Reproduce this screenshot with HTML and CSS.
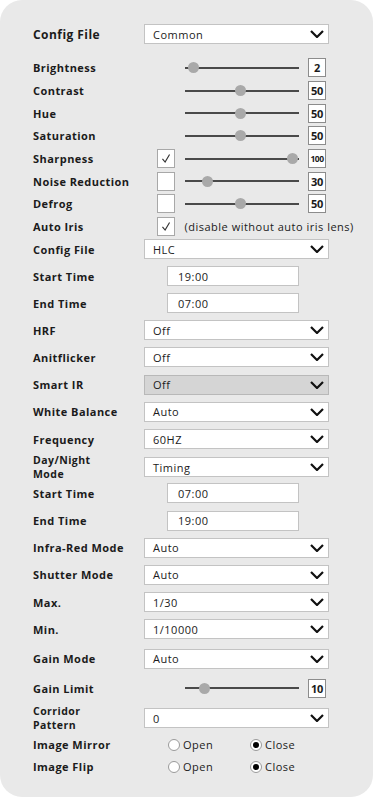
FILE: index.html
```html
<!DOCTYPE html>
<html lang="en">
  <head>
    <meta charset="UTF-8" />
    <meta name="viewport" content="width=device-width, initial-scale=1.0" />
    <title>Image Settings</title>
    <link rel="stylesheet" href="styles.css">
  </head>
  <body>
    <div class="panel">
      <div class="row row-top">
        <span class="label label-lg">Config File</span>
        <div class="select"><span>Common</span><svg class="chev" viewBox="0 0 14 8"><path d="M1 1 L7 7 L13 1" /></svg></div>
      </div>

      <div class="group-sliders">
        <div class="row row-s">
          <span class="label">Brightness</span>
          <div class="slider-ctrl">
            <span></span>
            <div class="slider"><span class="thumb" style="left: 9px"></span></div>
            <span class="val">2</span>
          </div>
        </div>
        <div class="row row-s">
          <span class="label">Contrast</span>
          <div class="slider-ctrl">
            <span></span>
            <div class="slider"><span class="thumb" style="left: 56px"></span></div>
            <span class="val">50</span>
          </div>
        </div>
        <div class="row row-s">
          <span class="label">Hue</span>
          <div class="slider-ctrl">
            <span></span>
            <div class="slider"><span class="thumb" style="left: 56px"></span></div>
            <span class="val">50</span>
          </div>
        </div>
        <div class="row row-s">
          <span class="label">Saturation</span>
          <div class="slider-ctrl">
            <span></span>
            <div class="slider"><span class="thumb" style="left: 56px"></span></div>
            <span class="val">50</span>
          </div>
        </div>
        <div class="row row-s">
          <span class="label">Sharpness</span>
          <div class="slider-ctrl">
            <span class="check"><svg viewBox="0 0 18 19"><path d="M5 10 L8 13.5 L13 5" /></svg></span>
            <div class="slider"><span class="thumb" style="left: 108px"></span></div>
            <span class="val val-sm">100</span>
          </div>
        </div>
        <div class="row row-s">
          <span class="label">Noise Reduction</span>
          <div class="slider-ctrl">
            <span class="check"></span>
            <div class="slider"><span class="thumb" style="left: 23px"></span></div>
            <span class="val">30</span>
          </div>
        </div>
        <div class="row row-s">
          <span class="label">Defrog</span>
          <div class="slider-ctrl">
            <span class="check"></span>
            <div class="slider"><span class="thumb" style="left: 56px"></span></div>
            <span class="val">50</span>
          </div>
        </div>
        <div class="row row-s">
          <span class="label">Auto Iris</span>
          <div class="slider-ctrl">
            <span class="check"><svg viewBox="0 0 18 19"><path d="M5 10 L8 13.5 L13 5" /></svg></span>
            <span class="note">(disable without auto iris lens)</span>
          </div>
        </div>
        <div class="row row-s">
          <span class="label">Config File</span>
          <div class="select"><span>HLC</span><svg class="chev" viewBox="0 0 14 8"><path d="M1 1 L7 7 L13 1" /></svg></div>
        </div>
      </div>

      <div class="group-time">
        <div class="row row-t">
          <span class="label">Start Time</span>
          <div class="time">19:00</div>
        </div>
        <div class="row row-t">
          <span class="label">End Time</span>
          <div class="time">07:00</div>
        </div>
      </div>

      <div class="group-main">
        <div class="row row-m">
          <span class="label">HRF</span>
          <div class="select"><span>Off</span><svg class="chev" viewBox="0 0 14 8"><path d="M1 1 L7 7 L13 1" /></svg></div>
        </div>
        <div class="row row-m">
          <span class="label">Anitflicker</span>
          <div class="select"><span>Off</span><svg class="chev" viewBox="0 0 14 8"><path d="M1 1 L7 7 L13 1" /></svg></div>
        </div>
        <div class="row row-m">
          <span class="label">Smart IR</span>
          <div class="select select-off"><span>Off</span><svg class="chev" viewBox="0 0 14 8"><path d="M1 1 L7 7 L13 1" /></svg></div>
        </div>
        <div class="row row-m">
          <span class="label">White Balance</span>
          <div class="select"><span>Auto</span><svg class="chev" viewBox="0 0 14 8"><path d="M1 1 L7 7 L13 1" /></svg></div>
        </div>
        <div class="row row-m">
          <span class="label">Frequency</span>
          <div class="select"><span>60HZ</span><svg class="chev" viewBox="0 0 14 8"><path d="M1 1 L7 7 L13 1" /></svg></div>
        </div>
        <div class="row row-m">
          <span class="label label-2">Day/Night<br>Mode</span>
          <div class="select"><span>Timing</span><svg class="chev" viewBox="0 0 14 8"><path d="M1 1 L7 7 L13 1" /></svg></div>
        </div>
        <div class="row row-m">
          <span class="label">Start Time</span>
          <div class="time">07:00</div>
        </div>
        <div class="row row-m">
          <span class="label">End Time</span>
          <div class="time">19:00</div>
        </div>
        <div class="row row-m">
          <span class="label">Infra-Red Mode</span>
          <div class="select"><span>Auto</span><svg class="chev" viewBox="0 0 14 8"><path d="M1 1 L7 7 L13 1" /></svg></div>
        </div>
        <div class="row row-m">
          <span class="label">Shutter Mode</span>
          <div class="select"><span>Auto</span><svg class="chev" viewBox="0 0 14 8"><path d="M1 1 L7 7 L13 1" /></svg></div>
        </div>
        <div class="row row-m">
          <span class="label">Max.</span>
          <div class="select"><span>1/30</span><svg class="chev" viewBox="0 0 14 8"><path d="M1 1 L7 7 L13 1" /></svg></div>
        </div>
        <div class="row row-m">
          <span class="label">Min.</span>
          <div class="select"><span>1/10000</span><svg class="chev" viewBox="0 0 14 8"><path d="M1 1 L7 7 L13 1" /></svg></div>
        </div>
      </div>

      <div class="group-gain">
        <div class="row row-g">
          <span class="label">Gain Mode</span>
          <div class="select"><span>Auto</span><svg class="chev" viewBox="0 0 14 8"><path d="M1 1 L7 7 L13 1" /></svg></div>
        </div>
        <div class="row row-gl">
          <span class="label">Gain Limit</span>
          <div class="slider-ctrl">
            <span></span>
            <div class="slider"><span class="thumb" style="left: 20px"></span></div>
            <span class="val">10</span>
          </div>
        </div>
        <div class="row row-c">
          <span class="label label-2">Corridor<br>Pattern</span>
          <div class="select"><span>0</span><svg class="chev" viewBox="0 0 14 8"><path d="M1 1 L7 7 L13 1" /></svg></div>
        </div>
        <div class="row row-r">
          <span class="label">Image Mirror</span>
          <div class="radios">
            <span class="radio"><span class="dot"></span>Open</span>
            <span class="radio on"><span class="dot"></span>Close</span>
          </div>
        </div>
        <div class="row row-r">
          <span class="label">Image Flip</span>
          <div class="radios">
            <span class="radio"><span class="dot"></span>Open</span>
            <span class="radio on"><span class="dot"></span>Close</span>
          </div>
        </div>
      </div>
    </div>
  </body>
</html>
```

FILE: styles.css
```css
:root {
  --panel: #e9e9e9;
  --text: #1b1b1b;
  --line: #c3c3c3;
  --dark-line: #8c8c8c;
  --thumb: #a9a9a9;
  --track: #4a4a4a;
}
body {
  margin: 0;
  background: #ffffff;
  font-family: "Open Sans", "Liberation Sans", sans-serif;
  color: var(--text);
}
.panel {
  box-sizing: border-box;
  width: 373px;
  height: 797px;
  background: var(--panel);
  border-radius: 22px;
  padding: 24px 0 0 33px;
}
.row {
  display: grid;
  grid-template-columns: 111px 1fr;
  align-items: center;
}
.row-top {
  height: 20px;
  margin-bottom: 12.5px;
}
.row-s {
  height: 22.7px;
}
.group-time {
  padding-top: 2px;
}
.row-t {
  height: 27px;
}
.row-m {
  height: 27.2px;
}
.row-g {
  height: 30px;
  margin-top: 1px;
}
.row-gl {
  height: 29px;
}
.row-c {
  height: 31px;
}
.row-r {
  height: 22px;
}
.label {
  font-size: 11px;
  font-weight: 700;
  line-height: 15px;
  letter-spacing: 0.45px;
}
.label-lg {
  font-size: 12px;
}
.label-2 {
  font-size: 10.5px;
  line-height: 14.5px;
}
.select {
  box-sizing: border-box;
  width: 185px;
  height: 20px;
  background: #ffffff;
  border: 1px solid var(--line);
  display: flex;
  align-items: center;
  justify-content: space-between;
  padding: 0 4px 0 8px;
  font-size: 11px;
  letter-spacing: 0.5px;
}
.select-off {
  background: #d5d5d5;
  border-color: #b8b8b8;
}
.chev {
  width: 14px;
  height: 8px;
  fill: none;
  stroke: #111111;
  stroke-width: 2.2;
}
.time {
  box-sizing: border-box;
  width: 132px;
  height: 20px;
  margin-left: 23px;
  background: #ffffff;
  border: 1px solid var(--line);
  padding-left: 10px;
  display: flex;
  align-items: center;
  font-size: 11px;
  letter-spacing: 0.5px;
}
.slider-ctrl {
  display: grid;
  grid-template-columns: 18px 114px 18px;
  column-gap: 9.5px;
  align-items: center;
  padding-left: 13px;
}
.slider {
  position: relative;
  height: 2px;
  background: var(--track);
}
.thumb {
  position: absolute;
  top: -4.5px;
  width: 11px;
  height: 11px;
  margin-left: -5.5px;
  border-radius: 50%;
  background: var(--thumb);
}
.val {
  box-sizing: border-box;
  width: 18px;
  height: 19px;
  background: #ffffff;
  border: 1px solid var(--dark-line);
  display: flex;
  align-items: center;
  justify-content: center;
  font-size: 11px;
  font-weight: 700;
  letter-spacing: -0.3px;
}
.val-sm {
  font-size: 8.5px;
  letter-spacing: -0.5px;
}
.check {
  box-sizing: border-box;
  width: 18px;
  height: 19px;
  background: #ffffff;
  border: 1px solid #a8a8a8;
}
.check svg {
  display: block;
  width: 16px;
  height: 17px;
  fill: none;
  stroke: #333333;
  stroke-width: 1.3;
}
.note {
  grid-column: 2 / 4;
  font-size: 11px;
  letter-spacing: 0.5px;
  white-space: nowrap;
}
.radios {
  display: grid;
  grid-template-columns: 82px auto;
  padding-left: 24px;
}
.radio {
  display: flex;
  align-items: center;
  gap: 3px;
  font-size: 11px;
  letter-spacing: 0.5px;
}
.dot {
  box-sizing: border-box;
  width: 12px;
  height: 12px;
  border-radius: 50%;
  border: 1px solid #9a9a9a;
  background: #ffffff;
  display: grid;
  place-items: center;
}
.radio.on .dot::after {
  content: "";
  width: 6px;
  height: 6px;
  border-radius: 50%;
  background: #000000;
}
```
